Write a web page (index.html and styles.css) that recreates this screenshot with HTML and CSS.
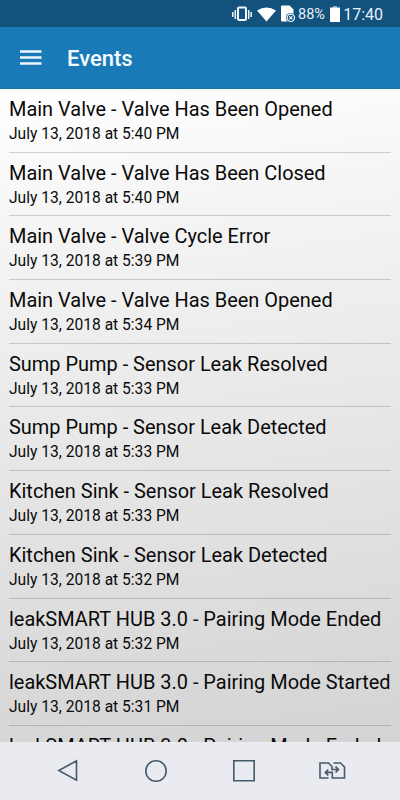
FILE: index.html
```html
<!DOCTYPE html>
<html lang="en">
<head>
<meta charset="utf-8">
<title>Events</title>
<link rel="stylesheet" href="styles.css">
</head>
<body>
<div class="screen">
  <div class="status">
    <svg class="status-icons" width="64" height="18" viewBox="0 0 64 18">
      <g fill="none" stroke="#f4f6fb" stroke-width="1.5"><path d="M.8 7v5M3.3 5v9M16.7 5v9M19.2 7v5"/><rect x="6" y="2.500" width="8" height="12.6" rx="1" stroke-width="2"/></g>
      <path fill="#fff" d="M25 5.500Q34.500 -.7 44 5.500L34.500 16.500Z"/>
      <path fill="#fff" d="M50 .5h7.500l4 4v5H57v7H50q-1 0-1-1V1.500q0-1 1-1z"/>
      <circle cx="58.800" cy="12.800" r="4.900" fill="#12527d"/><circle cx="58.800" cy="12.800" r="3.700" fill="none" stroke="#fff" stroke-width="1.200"/>
      <path d="M57.300 11.300l3 3m0-3l-3 3" stroke="#fff" stroke-width="1.200"/>
    </svg>
    <span class="percent">88%</span>
    <svg class="battery" width="10" height="16" viewBox="0 0 10 16"><path fill="#91afc5" d="M3 0h4v2H3z"/><path fill="#fff" d="M0 1.500h10V16H0z"/></svg>
    <span class="clock">17:40</span>
  </div>
  <header class="bar">
    <svg width="22" height="16" viewBox="0 0 22 16"><path d="M0 1.500h21.500M0 7.500h21.500M0 13.500h21.500" stroke="#edf6fc" stroke-width="2.400"/></svg>
    <h1>Events</h1>
  </header>
  <main class="list">
    <div class="row"><div class="title">Main Valve - Valve Has Been Opened</div><div class="date">July 13, 2018 at 5:40 PM</div></div>
    <div class="row"><div class="title">Main Valve - Valve Has Been Closed</div><div class="date">July 13, 2018 at 5:40 PM</div></div>
    <div class="row"><div class="title">Main Valve - Valve Cycle Error</div><div class="date">July 13, 2018 at 5:39 PM</div></div>
    <div class="row"><div class="title">Main Valve - Valve Has Been Opened</div><div class="date">July 13, 2018 at 5:34 PM</div></div>
    <div class="row"><div class="title">Sump Pump - Sensor Leak Resolved</div><div class="date">July 13, 2018 at 5:33 PM</div></div>
    <div class="row"><div class="title">Sump Pump - Sensor Leak Detected</div><div class="date">July 13, 2018 at 5:33 PM</div></div>
    <div class="row"><div class="title">Kitchen Sink - Sensor Leak Resolved</div><div class="date">July 13, 2018 at 5:33 PM</div></div>
    <div class="row"><div class="title">Kitchen Sink - Sensor Leak Detected</div><div class="date">July 13, 2018 at 5:32 PM</div></div>
    <div class="row"><div class="title">leakSMART HUB 3.0 - Pairing Mode Ended</div><div class="date">July 13, 2018 at 5:32 PM</div></div>
    <div class="row"><div class="title">leakSMART HUB 3.0 - Pairing Mode Started</div><div class="date">July 13, 2018 at 5:31 PM</div></div>
    <div class="row"><div class="title">leakSMART HUB 3.0 - Pairing Mode Ended</div></div>
  </main>
  <nav class="nav">
    <svg width="28" height="24" viewBox="0 0 28 24"><path d="M22.500 1.800v19.400L4.800 11.500z"/></svg>
    <svg width="28" height="24" viewBox="0 0 28 24"><circle cx="14" cy="12" r="10.200"/></svg>
    <svg width="28" height="24" viewBox="0 0 28 24"><path d="M3.800 1.800h20.400v20H3.800z"/></svg>
    <svg width="28" height="24" viewBox="0 0 28 24"><path d="M10.500 19H2V4h8.500l3.500 3.500v3h6M17.500 7.600l3 2.900-3 2.900M15.500 4h7L26.500 8v11H14.300v-5.600H7.500M10.300 10.500l-3 2.900 3 2.900"/></svg>
  </nav>
</div>
</body>
</html>
```
FILE: styles.css
```css
* { box-sizing: border-box; }
body { margin: 0; font-family: Roboto, "Liberation Sans", sans-serif; }
.screen { width: 400px; height: 800px; display: flex; flex-direction: column; overflow: hidden; }
.status {
  height: 27px; flex: none; background: #12527d; color: #e9f0f8;
  display: flex; align-items: center; padding: 1px 17px 0 232px;
}
.status-icons { flex: none; }
.percent { font-size: 14.5px; width: 30px; margin-left: 2px; white-space: nowrap; }
.battery { flex: none; margin-left: 3px; }
.clock { font-size: 16px; margin-left: 3px; white-space: nowrap; }
.bar {
  height: 62px; flex: none; background: #1a79b7; border-bottom: 1px solid #1972ac;
  display: flex; align-items: center; gap: 25px; padding-left: 20px;
}
.bar h1 { margin: 2px 0 0; font-size: 22px; font-weight: 500; color: #f5faff; }
.list {
  height: 653px; flex: none; overflow: hidden; padding: 0 9px;
  background: linear-gradient(172deg, #fff 0%, #f5f5f5 20%, #d8d8d8 88%, #d4d4d4 100%);
}
.row { height: 63.7px; padding-top: 8px; border-bottom: 1px solid rgba(0, 0, 0, .17); color: #0a0a0a; white-space: nowrap; }
.title { font-size: 19.95px; line-height: 24px; }
.date { font-size: 15.6px; line-height: 26px; }
.nav {
  height: 58px; flex: none; background: #e9ebf0;
  display: flex; align-items: center; gap: 60px; padding-left: 54px;
}
.nav svg { fill: none; stroke: #455a6b; stroke-width: 1.6; }
```
